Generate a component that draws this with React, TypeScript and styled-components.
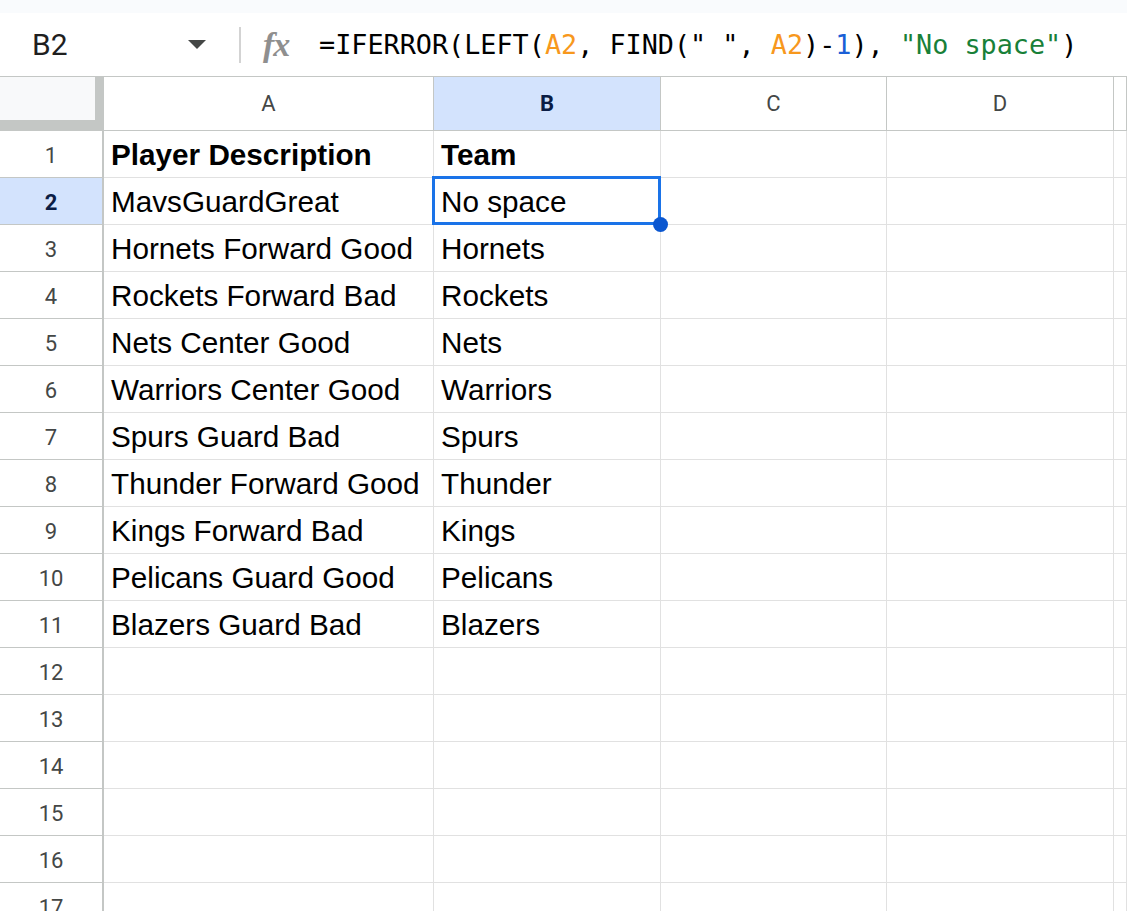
import React from 'react';
import styled, { createGlobalStyle } from 'styled-components';

const GlobalStyle = createGlobalStyle`
  html, body {
    margin: 0;
    padding: 0;
    background: #ffffff;
    overflow: hidden;
  }
  body {
    font-family: "Liberation Sans", Arial, sans-serif;
  }
`;

const COLS = '104px 330px 227px 226px 227px 1fr';

const Page = styled.div`
  width: 1127px;
  height: 911px;
  overflow: hidden;
  background: #ffffff;
`;

const TopStrip = styled.div`
  height: 13px;
  background: #f9fbfd;
`;

const FormulaBar = styled.div`
  height: 63px;
  display: flex;
  align-items: center;
  background: #ffffff;
  border-bottom: 1px solid #c4c7c5;
`;

const NameBox = styled.div`
  width: 222px;
  padding-left: 32px;
  padding-right: 16px;
  box-sizing: border-box;
  display: flex;
  align-items: center;
  justify-content: space-between;
  font-family: Roboto, "Liberation Sans", sans-serif;
  font-size: 30px;
  color: #1f1f1f;
`;

const Caret = styled.span`
  width: 0;
  height: 0;
  border-left: 9px solid transparent;
  border-right: 9px solid transparent;
  border-top: 9px solid #444746;
`;

const Divider = styled.div`
  width: 2px;
  height: 36px;
  background: #d3d3d3;
  margin-left: 17px;
`;

const FxMark = styled.span`
  margin-left: 22px;
  width: 56px;
  font-family: "Liberation Serif", "DejaVu Serif", serif;
  font-style: italic;
  font-weight: bold;
  font-size: 34px;
  color: #8f8f8f;
  letter-spacing: -1px;
`;

const Formula = styled.div`
  font-family: "DejaVu Sans Mono", "Liberation Mono", monospace;
  font-size: 26.8px;
  color: #000000;
  white-space: pre;
`;

const Tok = styled.span<{ $kind: 'ref' | 'num' | 'str' }>`
  color: ${p => (p.$kind === 'ref' ? '#f7981d' : p.$kind === 'num' ? '#1a5fd6' : '#188038')};
`;

const HeaderRow = styled.div`
  display: grid;
  grid-template-columns: ${COLS};
  height: 54px;
  border-bottom: 1px solid #c4c7c5;
  box-sizing: border-box;
`;

const Corner = styled.div`
  background: #c4c7c5;
  display: grid;
  grid-template-columns: 95px 1fr;
  grid-template-rows: 43px 1fr;
`;

const CornerFace = styled.div`
  background: #f8f9fa;
`;

const ColHead = styled.div<{ $active?: boolean }>`
  display: flex;
  align-items: center;
  justify-content: center;
  border-right: 1px solid #c4c7c5;
  background: ${p => (p.$active ? '#d3e3fd' : '#ffffff')};
  color: ${p => (p.$active ? '#0b1d45' : '#444746')};
  font-weight: ${p => (p.$active ? 'bold' : 'normal')};
  font-family: Roboto, "Liberation Sans", sans-serif;
  font-size: 22px;
`;

const Row = styled.div`
  display: grid;
  grid-template-columns: ${COLS};
  height: 47px;
`;

const RowHead = styled.div<{ $active?: boolean }>`
  display: flex;
  align-items: center;
  justify-content: center;
  box-sizing: border-box;
  padding-top: 2px;
  border-right: 2px solid #c4c7c5;
  border-bottom: 1px solid #c4c7c5;
  background: ${p => (p.$active ? '#d3e3fd' : '#ffffff')};
  color: ${p => (p.$active ? '#0b1d45' : '#444746')};
  font-weight: ${p => (p.$active ? 'bold' : 'normal')};
  font-family: Roboto, "Liberation Sans", sans-serif;
  font-size: 22px;
`;

const Cell = styled.div<{ $bold?: boolean }>`
  position: relative;
  display: flex;
  align-items: center;
  box-sizing: border-box;
  padding-left: 7px;
  padding-top: 2px;
  border-right: 1px solid #e1e1e1;
  border-bottom: 1px solid #e1e1e1;
  font-family: "Liberation Sans", Arial, sans-serif;
  font-size: 29.7px;
  font-weight: ${p => (p.$bold ? 'bold' : 'normal')};
  color: #000000;
  white-space: nowrap;
`;

const Selection = styled.div`
  position: absolute;
  left: -2px;
  top: -2px;
  right: -1px;
  bottom: -1px;
  border: 3px solid #1a73e8;
  pointer-events: none;
  z-index: 2;
`;

const Handle = styled.div`
  position: absolute;
  right: -8px;
  bottom: -8px;
  width: 15px;
  height: 15px;
  border-radius: 50%;
  background: #0b57d0;
  z-index: 3;
`;

const header = ['Player Description', 'Team'];

const data: [string, string][] = [
  ['MavsGuardGreat', 'No space'],
  ['Hornets Forward Good', 'Hornets'],
  ['Rockets Forward Bad', 'Rockets'],
  ['Nets Center Good', 'Nets'],
  ['Warriors Center Good', 'Warriors'],
  ['Spurs Guard Bad', 'Spurs'],
  ['Thunder Forward Good', 'Thunder'],
  ['Kings Forward Bad', 'Kings'],
  ['Pelicans Guard Good', 'Pelicans'],
  ['Blazers Guard Bad', 'Blazers'],
];

export default function App() {
  const rows: { a: string; b: string; bold?: boolean }[] = [
    { a: header[0], b: header[1], bold: true },
    ...data.map(([a, b]) => ({ a, b })),
  ];
  while (rows.length < 17) rows.push({ a: '', b: '' });

  return (
    <Page>
      <GlobalStyle />
      <TopStrip />
      <FormulaBar>
        <NameBox>
          <span>B2</span>
          <Caret />
        </NameBox>
        <Divider />
        <FxMark>fx</FxMark>
        <Formula>
          =IFERROR(LEFT(<Tok $kind="ref">A2</Tok>, FIND(" ", <Tok $kind="ref">A2</Tok>)-<Tok $kind="num">1</Tok>), <Tok $kind="str">"No space"</Tok>)
        </Formula>
      </FormulaBar>
      <HeaderRow>
        <Corner>
          <CornerFace />
        </Corner>
        <ColHead>A</ColHead>
        <ColHead $active>B</ColHead>
        <ColHead>C</ColHead>
        <ColHead>D</ColHead>
        <ColHead />
      </HeaderRow>
      {rows.map((r, i) => {
        const n = i + 1;
        const sel = n === 2;
        return (
          <Row key={n}>
            <RowHead $active={sel}>{n}</RowHead>
            <Cell $bold={r.bold}>{r.a}</Cell>
            <Cell $bold={r.bold}>
              {r.b}
              {sel && (
                <>
                  <Selection />
                  <Handle />
                </>
              )}
            </Cell>
            <Cell />
            <Cell />
            <Cell />
          </Row>
        );
      })}
    </Page>
  );
}
